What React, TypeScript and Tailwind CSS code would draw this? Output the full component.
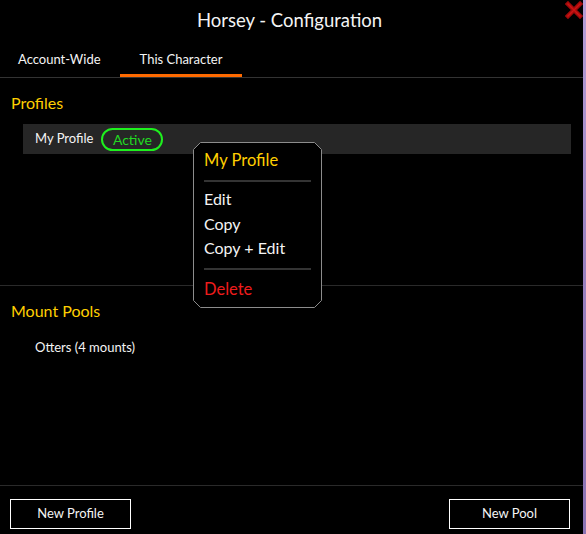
import { useState } from "react";

function MenuFrame() {
  return (
    <svg className="absolute inset-0" width="129" height="166" viewBox="0 0 129 166">
      <polygon
        points="7.5,0.5 121.5,0.5 128.5,7.5 128.5,158.5 121.5,165.5 7.5,165.5 0.5,158.5 0.5,7.5"
        fill="#000"
        stroke="#8c8c8c"
        strokeWidth="1"
      />
    </svg>
  );
}

function ProfileMenu() {
  return (
    <div className="absolute left-[193px] top-[142px] w-[129px] h-[166px]">
      <MenuFrame />
      <div className="relative px-[11px]">
        <div className="pt-[6px] h-[30px] leading-[24px] text-[16.5px] text-[#ffcf00]">My Profile</div>
        <div className="mt-[8px] h-[2px] bg-[#343434]" />
        <div className="mt-[5px] text-[16px] text-[#f4f4f4]">
          <div className="h-[24px] leading-[24px]">Edit</div>
          <div className="mt-px h-[24px] leading-[24px]">Copy</div>
          <div className="h-[24px] leading-[24px]">Copy + Edit</div>
        </div>
        <div className="mt-[8px] h-[2px] bg-[#343434]" />
        <div className="mt-[7px] h-[24px] leading-[24px] text-[16.5px] text-[#ee1c1c]">Delete</div>
      </div>
    </div>
  );
}

export default function App() {
  const [tab, setTab] = useState("char");

  return (
    <div className="flex w-[586px] h-[534px] bg-black font-['Lato','Liberation_Sans',sans-serif]">
      <div className="relative flex w-[583px] flex-col bg-black">
        {/* header */}
        <div className="flex h-[41px] items-center justify-center pr-[4px] text-[18.5px] text-[#f4f4f4]">
          Horsey - Configuration
        </div>
        <button className="absolute left-[565px] top-[1px] h-[18px] w-[18px]">
          <svg viewBox="0 0 18 18" className="h-[18px] w-[18px]">
            <path d="M3 3 L15 15 M15 3 L3 15" stroke="#a00a0a" strokeWidth="4.5" strokeLinecap="square" />
            <path d="M3 3 L15 15 M15 3 L3 15" stroke="#cc1414" strokeWidth="1.5" strokeLinecap="square" />
          </svg>
        </button>

        {/* tabs */}
        <div className="flex h-[37px] border-b border-[#333]">
          <button
            onClick={() => setTab("account")}
            className={`w-[120px] pl-[18px] text-left text-[13px] text-[#f4f4f4] border-b-[3px] ${tab === "account" ? "border-[#ff6a00]" : "border-transparent"} pt-[4px]`}
          >
            Account-Wide
          </button>
          <button
            onClick={() => setTab("char")}
            className={`w-[122px] text-center text-[13px] text-[#f4f4f4] border-b-[3px] ${tab === "char" ? "border-[#ff6a00]" : "border-transparent"} pt-[4px]`}
          >
            This Character
          </button>
        </div>

        {/* profiles */}
        <div className="h-[208px] border-b border-[#2a2a2a] pt-[15px]">
          <div className="pl-[11px] h-[20px] leading-[20px] text-[16px] text-[#ffcf00]">Profiles</div>
          <div className="ml-[23px] mr-[12px] mt-[11px] flex h-[30px] items-center gap-[8px] bg-[#262626] pl-[12px]">
            <span className="text-[13px] text-[#f4f4f4]">My Profile</span>
            <span className="flex h-[23px] w-[62px] items-center justify-center rounded-full border-2 border-[#1ef01e] text-[14px] text-[#22d822]">
              Active
            </span>
          </div>
        </div>

        {/* mount pools */}
        <div className="h-[200px] border-b border-[#2a2a2a] pt-[15px]">
          <div className="pl-[11px] h-[20px] leading-[20px] text-[16px] text-[#ffcf00]">Mount Pools</div>
          <div className="mt-[17px] pl-[35px] h-[18px] leading-[18px] text-[13px] text-[#f4f4f4]">Otters (4 mounts)</div>
        </div>

        {/* footer */}
        <div className="flex justify-between pl-[10px] pr-[13px] pt-[13px]">
          <button className="h-[30px] w-[121px] border border-white text-[13px] text-[#f4f4f4]">New Profile</button>
          <button className="h-[30px] w-[121px] border border-white text-[13px] text-[#f4f4f4]">New Pool</button>
        </div>

        <ProfileMenu />
      </div>
      <div className="w-[3px] bg-gradient-to-b from-[#b8a0d8] via-[#9a82c0] to-[#8c74b4]" />
    </div>
  );
}
